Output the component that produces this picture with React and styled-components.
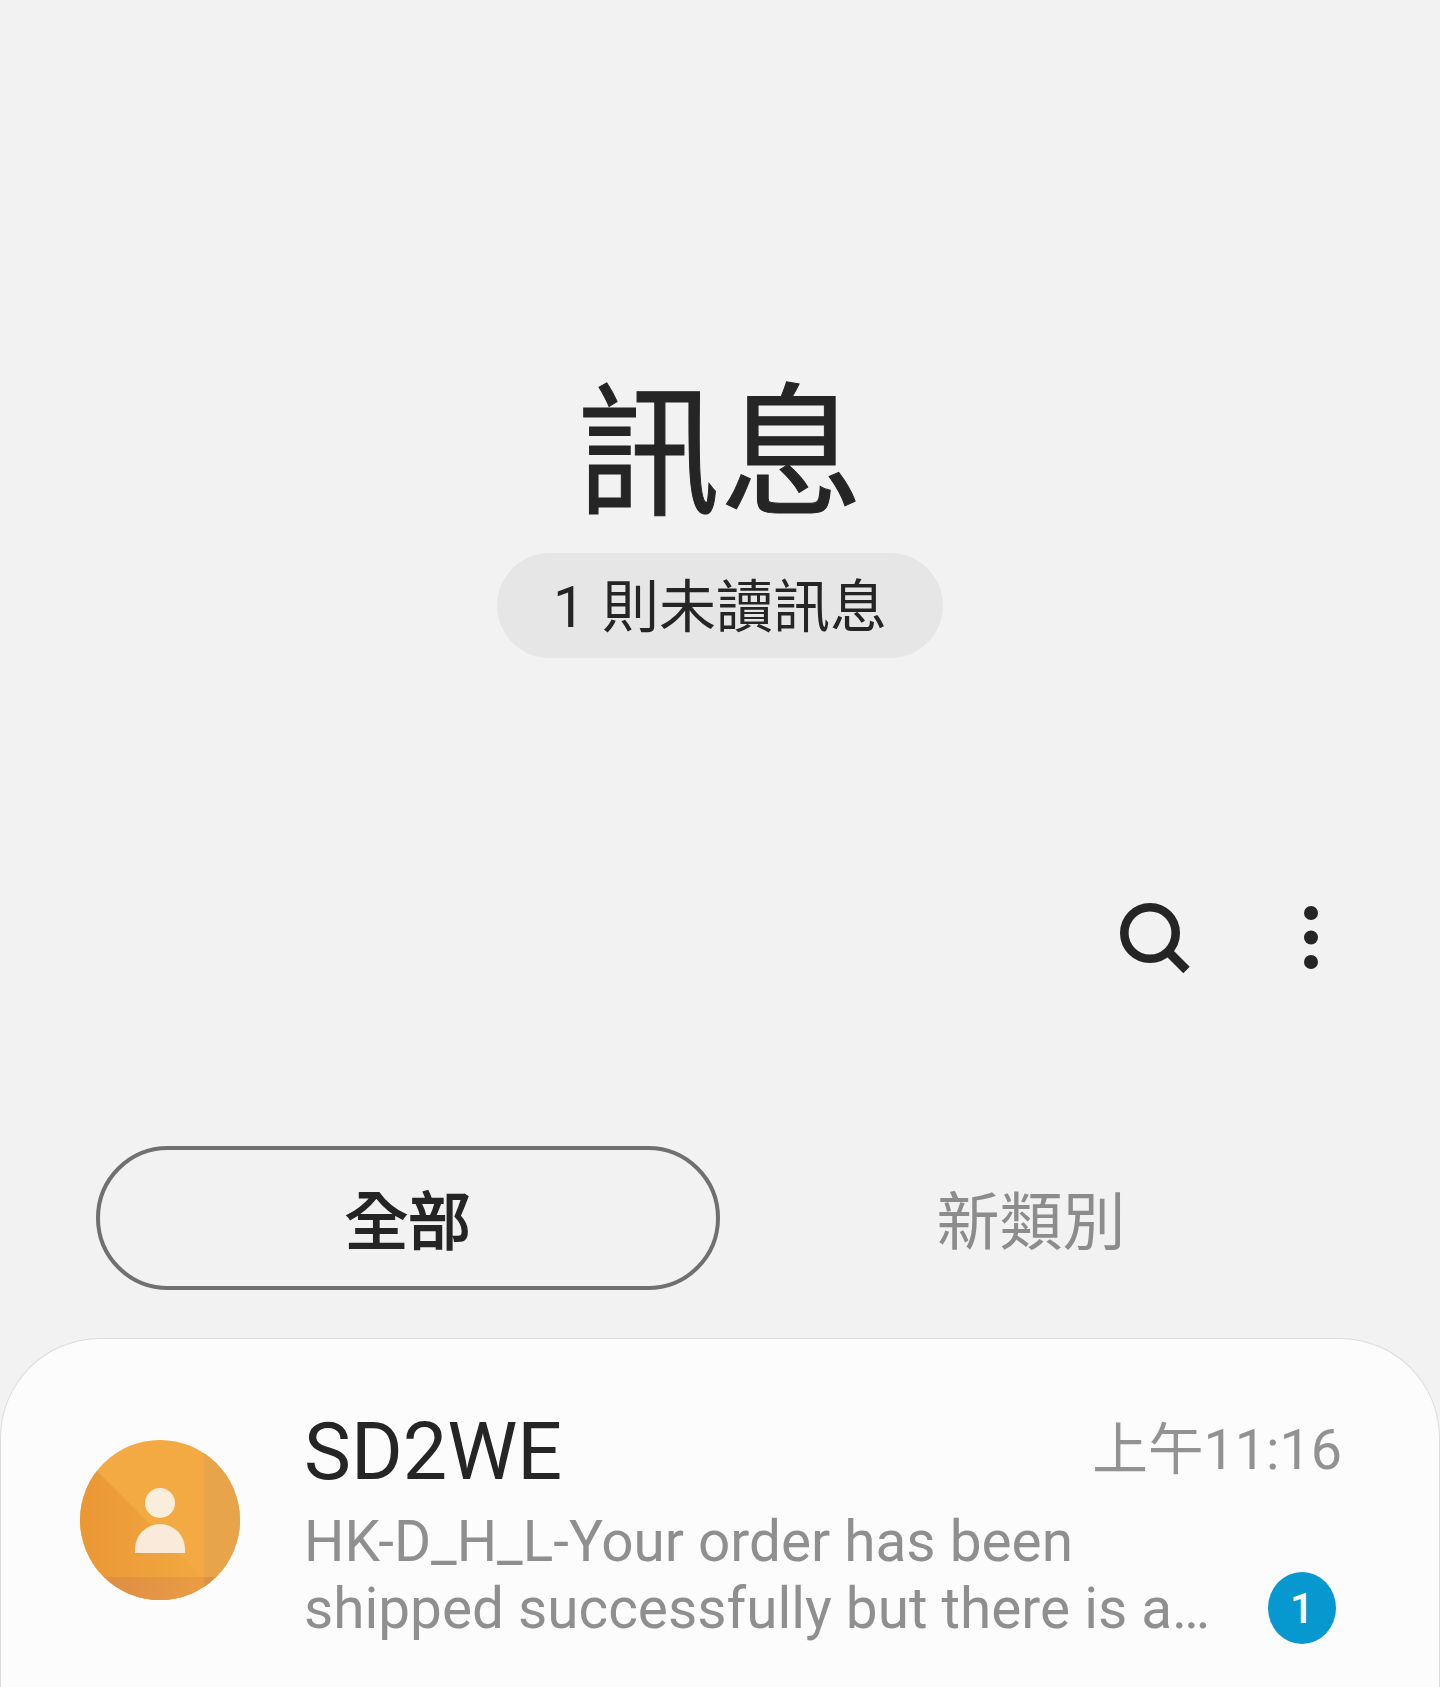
import React from "react";
import styled, { createGlobalStyle } from "styled-components";

const Global = createGlobalStyle`
  html, body { margin: 0; padding: 0; background: #f2f2f2; }
  * { box-sizing: border-box; }
`;

const FONT = `Roboto, "Noto Sans CJK TC", sans-serif`;

const Page = styled.div`
  width: 1440px;
  height: 1687px;
  overflow: hidden;
  background: #f2f2f2;
  font-family: ${FONT};
  display: flex;
  flex-direction: column;
`;
const Hero = styled.header`
  display: flex;
  flex-direction: column;
  align-items: center;
  padding-top: 362px;
  height: 856px;
`;
const Title = styled.h1`
  margin: 0;
  font-family: "Noto Sans CJK TC", sans-serif;
  font-size: 143px;
  line-height: 159px;
  font-weight: 400;
  color: #252525;
  -webkit-text-stroke: 1px #252525;
`;
const UnreadPill = styled.div`
  margin-top: 32px;
  width: 446px;
  height: 105px;
  border-radius: 53px;
  background: #e6e6e6;
  color: #252525;
  display: flex;
  align-items: center;
  justify-content: center;
  padding-bottom: 7px;
  font-size: 57px;
  word-spacing: 3px;
  white-space: nowrap;
`;
const Toolbar = styled.div`
  height: 290px;
  display: flex;
  justify-content: flex-end;
  align-items: flex-start;
  padding: 46px 121px 0 0;
  gap: 112px;
`;
const IconSvg = styled.svg`
  display: block;
  flex: none;
`;
const Tabs = styled.div`
  height: 192px;
  display: grid;
  grid-template-columns: 624px 622px;
  padding-left: 96px;
  align-items: start;
`;
const Tab = styled.div`
  height: 144px;
  padding-bottom: 3px;
  border-radius: 72px;
  border: 4px solid ${(p) => (p.$active ? "#707070" : "transparent")};
  color: ${(p) => (p.$active ? "#252525" : "#8c8c8c")};
  -webkit-text-stroke: ${(p) => (p.$active ? "1.8px #252525" : "0")};
  font-size: 63px;
  display: flex;
  align-items: center;
  justify-content: center;
`;
const Card = styled.section`
  flex: 1;
  background: #fcfcfc;
  border: 1px solid #dcdcdc;
  border-bottom: 0;
  border-radius: 100px 100px 0 0;
  padding: 101px 97px 0 79px;
  display: grid;
  grid-template-columns: 160px 1fr;
  column-gap: 64px;
  align-items: start;
`;
const Avatar = styled.svg`
  display: block;
`;
const Content = styled.div`
  margin-top: -34px;
  display: flex;
  flex-direction: column;
`;
const TopLine = styled.div`
  display: flex;
  justify-content: space-between;
  align-items: flex-start;
`;
const Sender = styled.div`
  font-size: 79px;
  line-height: 92px;
  font-weight: 400;
  color: #252525;
`;
const Time = styled.div`
  font-size: 55.6px;
  line-height: 80px;
  margin-top: 4px;
  color: #929292;
`;
const BottomLine = styled.div`
  display: flex;
  justify-content: space-between;
  align-items: flex-end;
  margin-top: 10px;
`;
const Preview = styled.div`
  width: 920px;
  font-size: 56.7px;
  line-height: 67px;
  font-weight: 400;
  color: #8f8f8f;
`;
const Badge = styled.div`
  width: 68px;
  height: 72px;
  margin: 0 6px -2px 0;
  border-radius: 50%;
  background: #0898d0;
  color: #fff;
  font-size: 42px;
  font-weight: 500;
  display: flex;
  align-items: center;
  justify-content: center;
`;

const SearchIcon = () => (
  <IconSvg width="72" height="72" viewBox="0 0 72 72">
    <circle cx="31" cy="31" r="25.7" fill="none" stroke="#252525" strokeWidth="8.6" />
    <path d="M49 49.5 L67.5 68" stroke="#252525" strokeWidth="9" fill="none" />
  </IconSvg>
);

const MoreIcon = () => (
  <IconSvg width="16" height="70" viewBox="0 0 16 70">
    <circle cx="8" cy="11" r="7" fill="#252525" />
    <circle cx="8" cy="35.5" r="7" fill="#252525" />
    <circle cx="8" cy="60" r="7" fill="#252525" />
  </IconSvg>
);

const ContactAvatar = () => (
  <Avatar width="160" height="160" viewBox="0 0 160 160">
    <defs>
      <clipPath id="disc"><circle cx="80" cy="80" r="80" /></clipPath>
      <linearGradient id="low" x1="0" x2="1" y1="0" y2="0">
        <stop offset="0" stopColor="#ea9736" />
        <stop offset="1" stopColor="#f2a940" />
      </linearGradient>
      <linearGradient id="foot" x1="0" x2="1" y1="0" y2="0">
        <stop offset="0" stopColor="#dc8a44" />
        <stop offset="1" stopColor="#ea9c44" />
      </linearGradient>
    </defs>
    <g clipPath="url(#disc)">
      <rect width="160" height="160" fill="#f3aa42" />
      <path d="M0 14 L124 138 L124 160 L0 160 Z" fill="url(#low)" />
      <rect x="124" width="36" height="160" fill="#e8a44b" />
      <rect y="137" width="124" height="23" fill="url(#foot)" />
      <rect x="124" y="137" width="36" height="23" fill="#de9145" />
    </g>
    <circle cx="80" cy="63" r="15" fill="#faeddb" />
    <path d="M55 113 V109 A25 25 0 0 1 105 109 V113 Z" fill="#f9ead9" />
  </Avatar>
);

export default function App() {
  return (
    <Page>
      <Global />
      <Hero>
        <Title>訊息</Title>
        <UnreadPill>1 則未讀訊息</UnreadPill>
      </Hero>
      <Toolbar>
        <SearchIcon />
        <MoreIcon />
      </Toolbar>
      <Tabs>
        <Tab $active>全部</Tab>
        <Tab>新類別</Tab>
      </Tabs>
      <Card>
        <ContactAvatar />
        <Content>
          <TopLine>
            <Sender>SD2WE</Sender>
            <Time>上午11:16</Time>
          </TopLine>
          <BottomLine>
            <Preview>HK-D_H_L-Your order has been shipped successfully but there is a…</Preview>
            <Badge>1</Badge>
          </BottomLine>
        </Content>
      </Card>
    </Page>
  );
}
